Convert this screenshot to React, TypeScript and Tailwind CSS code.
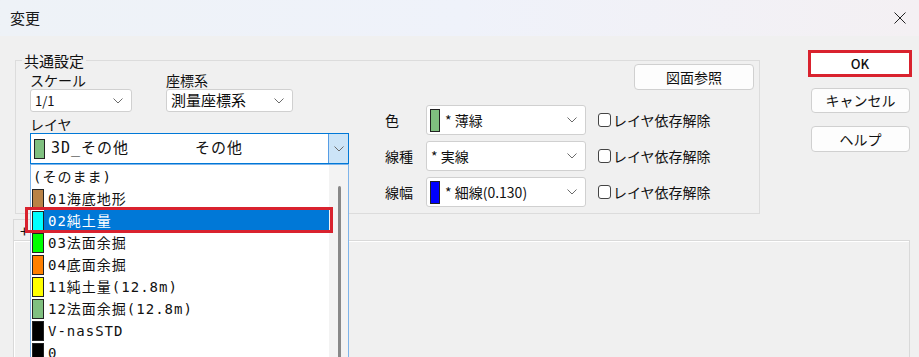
import React from "react";

const UI = { fontFamily: '"Noto Sans CJK JP", "Noto Sans", sans-serif' };
const LIST = { fontFamily: '"DejaVu Sans Mono", "Noto Sans CJK JP", monospace', letterSpacing: "1px" };

const layers = [
  { name: "(そのまま)", color: null },
  { name: "01海底地形", color: "#b98246" },
  { name: "02純土量", color: "#00ffff", selected: true },
  { name: "03法面余掘", color: "#00ff00" },
  { name: "04底面余掘", color: "#ff8000" },
  { name: "11純土量(12.8m)", color: "#ffff00" },
  { name: "12法面余掘(12.8m)", color: "#80c080" },
  { name: "V-nasSTD", color: "#000000" },
  { name: "0", color: "#000000" },
];

function Chevron() {
  return (
    <svg width="10" height="6" viewBox="0 0 10 6" className="shrink-0">
      <path d="M0.5 0.5 L5 5 L9.5 0.5" fill="none" stroke="#6b6b6b" strokeWidth="1" />
    </svg>
  );
}

function Select({ width, height, children }: { width: string; height: string; children: React.ReactNode }) {
  return (
    <div
      className={`flex items-center bg-white border border-[#d0d0d0] rounded-[3px] pl-[4px] pr-[8px] ${width} ${height}`}
    >
      <div className="flex-1 flex items-center gap-[5px] min-w-0 text-[14px] text-[#111]">{children}</div>
      <Chevron />
    </div>
  );
}

function Swatch({ color, className }: { color: string; className: string }) {
  return <span className={`shrink-0 border border-[#222] ${className}`} style={{ background: color }} />;
}

function DependRow({ label, children }: { label: string; children: React.ReactNode }) {
  return (
    <div className="flex items-center h-[30px]">
      <span className="w-[41px] text-[14px] text-[#111]">{label}</span>
      <Select width="w-[160px]" height="h-[30px]">
        {children}
      </Select>
      <span className="ml-[12px] w-[13px] h-[14px] rounded-[3px] border border-[#444] bg-white" />
      <span className="ml-[2px] text-[14px] text-[#111]">レイヤ依存解除</span>
    </div>
  );
}

export default function App() {
  return (
    <div className="w-[919px] h-[357px] overflow-hidden bg-[#f0f0f0] flex flex-col" style={UI}>
      {/* title bar */}
      <div className="h-[36px] shrink-0 flex items-center justify-between pl-[10px] pr-[13px] bg-gradient-to-r from-[#eef2f7] via-[#eff2fa] to-[#f4f0f3]">
        <span className="text-[15px] text-[#1a1a1a]">変更</span>
        <svg width="12" height="12" viewBox="0 0 12 12">
          <path d="M0.5 0.5 L11.5 11.5 M11.5 0.5 L0.5 11.5" stroke="#222" strokeWidth="1" />
        </svg>
      </div>

      <div className="flex items-start pl-[15px]">
        {/* 共通設定 group */}
        <div className="relative mt-[24px] w-[745px] h-[154px] border border-[#dcdcdc] flex pl-[14px] pr-[5px]">
          <span className="absolute -top-[10px] left-[6px] px-[2px] bg-[#f0f0f0] text-[15px] leading-[19px] text-[#111]">
            共通設定
          </span>

          <div className="flex flex-col pt-[11px] w-[319px]">
            <div className="flex gap-[34px]">
              <div className="flex flex-col">
                <span className="text-[14px] leading-[17px] text-[#111]">スケール</span>
                <Select width="w-[102px]" height="h-[23px]">
                  <span className="text-[13px]">1/1</span>
                </Select>
              </div>
              <div className="flex flex-col">
                <span className="text-[14px] leading-[17px] text-[#111]">座標系</span>
                <Select width="w-[127px]" height="h-[23px]">
                  <span className="text-[15px]">測量座標系</span>
                </Select>
              </div>
            </div>
            <span className="mt-[3px] text-[14px] leading-[18px] text-[#111]">レイヤ</span>

            {/* layer combobox with open list */}
            <div className="relative z-10">
              <div className="flex h-[31px] bg-white border border-[#0078d7]">
                <div className="flex-1 flex items-center pl-[3px] text-[15px] text-[#111]" style={LIST}>
                  <Swatch color="#80c080" className="w-[11px] h-[20px]" />
                  <span className="ml-[6px] w-[144px]">3D_その他</span>
                  <span>その他</span>
                </div>
                <div className="w-[20px] flex items-center justify-center bg-[#cce4f7] border-l border-[#569de5]">
                  <Chevron />
                </div>
              </div>

              <div className="absolute left-0 top-[31px] w-[319px] h-[230px] bg-white border border-[#7eb4ea] flex">
                <div className="flex-1 flex flex-col pt-[1px]">
                  {layers.map((l) => (
                    <div key={l.name} className="h-[22px] flex items-center pl-[1px] text-[14px]" style={LIST}>
                      {l.color ? (
                        <>
                          <Swatch color={l.color} className="w-[12px] h-[20px]" />
                          <span
                            className={`flex-1 h-full flex items-center pl-[4px] ${
                              l.selected ? "bg-[#0078d7] text-white" : "text-[#111]"
                            }`}
                          >
                            {l.name}
                          </span>
                        </>
                      ) : (
                        <span className="pl-[1px] text-[#111]">{l.name}</span>
                      )}
                    </div>
                  ))}
                </div>
                <div className="w-[19px] bg-[#f3f3f3] flex justify-center pt-[21px] pl-[1px]">
                  <div className="w-[3px] h-[200px] rounded-full bg-[#888]" />
                </div>
                {/* red annotation */}
                <div className="absolute left-[-6px] top-[42px] w-[308px] h-[26px] border-[3px] border-[#d9222e]" />
              </div>
            </div>
          </div>

          <div className="ml-auto flex flex-col items-end pt-[3px] w-[369px]">
            <button className="w-[120px] h-[26px] rounded-[4px] border border-[#d0d0d0] bg-[#fdfdfd] text-[14px] text-[#111]">
              図面参照
            </button>
            <div className="self-start mt-[15px] flex flex-col gap-[6px]">
              <DependRow label="色">
                <Swatch color="#80c080" className="w-[10px] h-[23px] ml-[-1px]" />
                <span>* 薄緑</span>
              </DependRow>
              <DependRow label="線種">
                <span>* 実線</span>
              </DependRow>
              <DependRow label="線幅">
                <Swatch color="#0000ff" className="w-[10px] h-[23px] ml-[-1px]" />
                <span>* 細線(0.130)</span>
              </DependRow>
            </div>
          </div>
        </div>

        {/* dialog buttons */}
        <div className="ml-[48px] mt-[14px] flex flex-col">
          <div className="w-[104px] h-[27px] border-[3px] border-[#d9222e] bg-white flex items-center justify-center text-[13px] font-medium text-[#111]">
            OK
          </div>
          <button className="ml-[3px] mt-[11px] w-[99px] h-[25px] rounded-[4px] border border-[#d0d0d0] bg-[#fdfdfd] text-[14px] text-[#111]">
            キャンセル
          </button>
          <button className="ml-[3px] mt-[13px] w-[99px] h-[26px] rounded-[4px] border border-[#d0d0d0] bg-[#fdfdfd] text-[14px] text-[#111]">
            ヘルプ
          </button>
        </div>
      </div>

      {/* tab area behind the list */}
      <div className="mt-[5px] pl-[13px] flex flex-col">
        <div className="w-[80px] h-[21px] border border-b-0 border-[#d9d9d9] flex items-center pl-[6px] text-[16px] leading-none text-[#111]">
          +
        </div>
        <div className="w-[897px] h-[140px] border border-[#d9d9d9] border-b-0 bg-[#f0f0f0] shadow-[inset_1px_1px_0_#ffffff]" />
      </div>
    </div>
  );
}
